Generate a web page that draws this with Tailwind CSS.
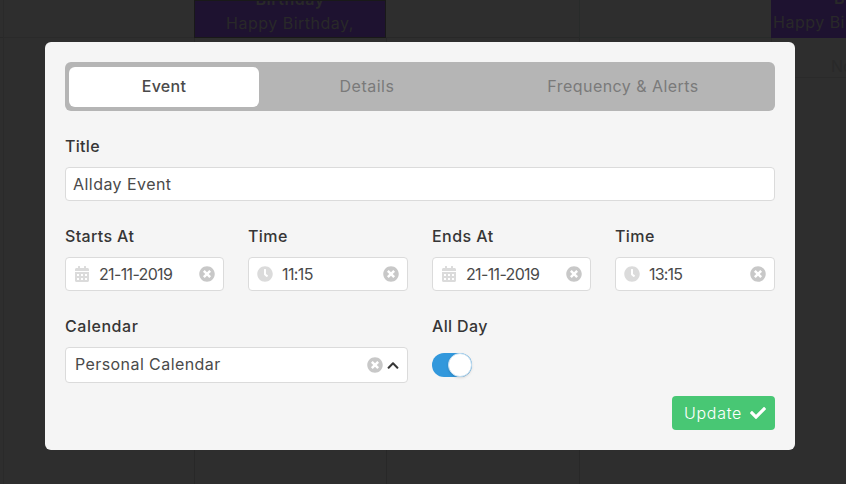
<!DOCTYPE html>
<html lang="en">
<head>
    <meta charset="UTF-8">
    <title>Edit Event</title>
    <script src="https://cdn.jsdelivr.net/npm/@tailwindcss/browser@4"></script>
</head>
<body class="relative w-[846px] h-[484px] overflow-hidden bg-[#2e2e2e] font-['Inter','Open_Sans',sans-serif] text-base text-[#4a4a4a]">
    <!-- Calendar behind the overlay -->
    <div class="grid grid-cols-[3px_191px_192px_193px_192px_75px] w-[846px] h-[484px] text-[#292929]">
        <div class="h-[38px] border-b border-[#282828]"></div>
        <div class="h-[38px] border-l border-b border-[#2a2a2a]"></div>
        <div class="h-[38px] border border-[#191919] bg-[#1e1230] text-center leading-[24px] tracking-[0.5px] overflow-hidden">
            <div class="font-semibold mt-[-14px]">Birthday</div>
            <div>Happy Birthday,</div>
        </div>
        <div class="h-[38px] border-b border-[#282828]"></div>
        <div class="h-[38px] border-l border-b border-[#282b2a]"></div>
        <div class="h-[38px] pl-[2px] bg-[#1e1230] whitespace-nowrap overflow-hidden leading-[24px] tracking-[0.5px]">
            <div class="font-semibold mt-[-14px] pl-[61px]">B</div>
            <div>Happy Birthday,</div>
        </div>
        <div class="h-[446px]"></div>
        <div class="h-[446px] border-l border-[#2a2a2a]"></div>
        <div class="h-[446px] border-l border-[#282828]"></div>
        <div class="h-[446px] border-l border-[#282828]"></div>
        <div class="h-[446px] border-l border-[#282828]"></div>
        <div class="h-[40px] border-l border-b border-[#2a2a2a] pl-[59px] pt-[18px] leading-[20px] whitespace-nowrap">No</div>
    </div>

    <!-- Modal -->
    <div class="absolute left-[45px] top-[42px] w-[750px] h-[408px] rounded-md bg-[#f5f5f5] p-5">
        <div class="flex h-[49px] rounded-md bg-[#b5b5b5] p-1 pt-[5px] text-center">
            <div class="w-[190px] h-[40px] rounded-md bg-white text-[#4a4a4a] leading-[38px] font-medium tracking-[0.3px]">Event</div>
            <div class="w-[216px] h-[40px] text-[#7a7a7a] leading-[38px] tracking-[0.5px]">Details</div>
            <div class="flex-1 h-[40px] text-[#7a7a7a] leading-[38px] tracking-[0.45px]">Frequency &amp; Alerts</div>
        </div>

        <label class="block mt-6 h-[22px] leading-[22px] font-medium text-[#363636] tracking-[0.3px]">Title</label>
        <div class="mt-[10px] h-[34px] pl-[7px] rounded border border-[#dbdbdb] bg-white leading-[32px] tracking-[0.45px]">Allday Event</div>

        <div class="grid grid-cols-[159px_160px_159px_160px] gap-x-6 mt-6">
            <div>
                <label class="block h-[22px] leading-[22px] font-medium text-[#363636] tracking-[0.35px]">Starts At</label>
                <div class="mt-[10px] flex items-center h-[34px] pl-[9px] pr-2 rounded border border-[#dbdbdb] bg-white">
                    <svg class="w-[14px] h-4 fill-[#dbdbdb]" viewBox="0 0 448 512"><path d="M0 464c0 26.5 21.5 48 48 48h352c26.5 0 48-21.5 48-48V192H0v272zm320-196c0-6.6 5.4-12 12-12h40c6.6 0 12 5.4 12 12v40c0 6.6-5.4 12-12 12h-40c-6.6 0-12-5.4-12-12v-40zm0 128c0-6.6 5.4-12 12-12h40c6.6 0 12 5.4 12 12v40c0 6.6-5.4 12-12 12h-40c-6.6 0-12-5.4-12-12v-40zM192 268c0-6.6 5.4-12 12-12h40c6.6 0 12 5.4 12 12v40c0 6.6-5.4 12-12 12h-40c-6.6 0-12-5.4-12-12v-40zm0 128c0-6.6 5.4-12 12-12h40c6.6 0 12 5.4 12 12v40c0 6.6-5.4 12-12 12h-40c-6.6 0-12-5.4-12-12v-40zM64 268c0-6.6 5.4-12 12-12h40c6.6 0 12 5.4 12 12v40c0 6.6-5.4 12-12 12H76c-6.6 0-12-5.4-12-12v-40zm0 128c0-6.6 5.4-12 12-12h40c6.6 0 12 5.4 12 12v40c0 6.6-5.4 12-12 12H76c-6.6 0-12-5.4-12-12v-40zM400 64h-48V16c0-8.8-7.2-16-16-16h-32c-8.8 0-16 7.2-16 16v48H160V16c0-8.8-7.2-16-16-16h-32c-8.8 0-16 7.2-16 16v48H48C21.5 64 0 85.5 0 112v48h448v-48c0-26.5-21.5-48-48-48z"/></svg>
                    <span class="ml-[10px] flex-1 tracking-[-0.65px]">21-11-2019</span>
                    <svg class="w-4 h-4 fill-[#c8c8c8]" viewBox="0 0 512 512"><path d="M256 8C119 8 8 119 8 256s111 248 248 248 248-111 248-248S393 8 256 8zm121.6 313.1c4.7 4.7 4.7 12.3 0 17L338 377.6c-4.7 4.7-12.3 4.7-17 0L256 312l-65.1 65.6c-4.7 4.7-12.3 4.7-17 0L134.4 338c-4.7-4.7-4.7-12.3 0-17l65.6-65-65.6-65.1c-4.7-4.7-4.7-12.3 0-17l39.6-39.6c4.7-4.7 12.3-4.7 17 0l65 65.7 65.1-65.6c4.7-4.7 12.3-4.7 17 0l39.6 39.6c4.7 4.7 4.7 12.3 0 17L312 256l65.6 65.1z"/></svg>
                </div>
            </div>
            <div>
                <label class="block h-[22px] leading-[22px] font-medium text-[#363636] tracking-[0.4px]">Time</label>
                <div class="mt-[10px] flex items-center h-[34px] pl-2 pr-2 rounded border border-[#dbdbdb] bg-white">
                    <svg class="w-4 h-4 fill-[#dbdbdb]" viewBox="0 0 512 512"><path d="M256,8C119,8,8,119,8,256S119,504,256,504,504,393,504,256,393,8,256,8Zm92.49,313h0l-20,25a16,16,0,0,1-22.49,2.5h0l-67-49.72a40,40,0,0,1-15-31.23V112a16,16,0,0,1,16-16h32a16,16,0,0,1,16,16V256l58,42.5A16,16,0,0,1,348.49,321Z"/></svg>
                    <span class="ml-[9px] flex-1 tracking-[-0.6px]">11:15</span>
                    <svg class="w-4 h-4 fill-[#c8c8c8]" viewBox="0 0 512 512"><path d="M256 8C119 8 8 119 8 256s111 248 248 248 248-111 248-248S393 8 256 8zm121.6 313.1c4.7 4.7 4.7 12.3 0 17L338 377.6c-4.7 4.7-12.3 4.7-17 0L256 312l-65.1 65.6c-4.7 4.7-12.3 4.7-17 0L134.4 338c-4.7-4.7-4.7-12.3 0-17l65.6-65-65.6-65.1c-4.7-4.7-4.7-12.3 0-17l39.6-39.6c4.7-4.7 12.3-4.7 17 0l65 65.7 65.1-65.6c4.7-4.7 12.3-4.7 17 0l39.6 39.6c4.7 4.7 4.7 12.3 0 17L312 256l65.6 65.1z"/></svg>
                </div>
            </div>
            <div>
                <label class="block h-[22px] leading-[22px] font-medium text-[#363636] tracking-[0.45px]">Ends At</label>
                <div class="mt-[10px] flex items-center h-[34px] pl-[9px] pr-2 rounded border border-[#dbdbdb] bg-white">
                    <svg class="w-[14px] h-4 fill-[#dbdbdb]" viewBox="0 0 448 512"><path d="M0 464c0 26.5 21.5 48 48 48h352c26.5 0 48-21.5 48-48V192H0v272zm320-196c0-6.6 5.4-12 12-12h40c6.6 0 12 5.4 12 12v40c0 6.6-5.4 12-12 12h-40c-6.6 0-12-5.4-12-12v-40zm0 128c0-6.6 5.4-12 12-12h40c6.6 0 12 5.4 12 12v40c0 6.6-5.4 12-12 12h-40c-6.6 0-12-5.4-12-12v-40zM192 268c0-6.6 5.4-12 12-12h40c6.6 0 12 5.4 12 12v40c0 6.6-5.4 12-12 12h-40c-6.6 0-12-5.4-12-12v-40zm0 128c0-6.6 5.4-12 12-12h40c6.6 0 12 5.4 12 12v40c0 6.6-5.4 12-12 12h-40c-6.6 0-12-5.4-12-12v-40zM64 268c0-6.6 5.4-12 12-12h40c6.6 0 12 5.4 12 12v40c0 6.6-5.4 12-12 12H76c-6.6 0-12-5.4-12-12v-40zm0 128c0-6.6 5.4-12 12-12h40c6.6 0 12 5.4 12 12v40c0 6.6-5.4 12-12 12H76c-6.6 0-12-5.4-12-12v-40zM400 64h-48V16c0-8.8-7.2-16-16-16h-32c-8.8 0-16 7.2-16 16v48H160V16c0-8.8-7.2-16-16-16h-32c-8.8 0-16 7.2-16 16v48H48C21.5 64 0 85.5 0 112v48h448v-48c0-26.5-21.5-48-48-48z"/></svg>
                    <span class="ml-[10px] flex-1 tracking-[-0.65px]">21-11-2019</span>
                    <svg class="w-4 h-4 fill-[#c8c8c8]" viewBox="0 0 512 512"><path d="M256 8C119 8 8 119 8 256s111 248 248 248 248-111 248-248S393 8 256 8zm121.6 313.1c4.7 4.7 4.7 12.3 0 17L338 377.6c-4.7 4.7-12.3 4.7-17 0L256 312l-65.1 65.6c-4.7 4.7-12.3 4.7-17 0L134.4 338c-4.7-4.7-4.7-12.3 0-17l65.6-65-65.6-65.1c-4.7-4.7-4.7-12.3 0-17l39.6-39.6c4.7-4.7 12.3-4.7 17 0l65 65.7 65.1-65.6c4.7-4.7 12.3-4.7 17 0l39.6 39.6c4.7 4.7 4.7 12.3 0 17L312 256l65.6 65.1z"/></svg>
                </div>
            </div>
            <div>
                <label class="block h-[22px] leading-[22px] font-medium text-[#363636] tracking-[0.4px]">Time</label>
                <div class="mt-[10px] flex items-center h-[34px] pl-2 pr-2 rounded border border-[#dbdbdb] bg-white">
                    <svg class="w-4 h-4 fill-[#dbdbdb]" viewBox="0 0 512 512"><path d="M256,8C119,8,8,119,8,256S119,504,256,504,504,393,504,256,393,8,256,8Zm92.49,313h0l-20,25a16,16,0,0,1-22.49,2.5h0l-67-49.72a40,40,0,0,1-15-31.23V112a16,16,0,0,1,16-16h32a16,16,0,0,1,16,16V256l58,42.5A16,16,0,0,1,348.49,321Z"/></svg>
                    <span class="ml-[9px] flex-1 tracking-[-0.8px]">13:15</span>
                    <svg class="w-4 h-4 fill-[#c8c8c8]" viewBox="0 0 512 512"><path d="M256 8C119 8 8 119 8 256s111 248 248 248 248-111 248-248S393 8 256 8zm121.6 313.1c4.7 4.7 4.7 12.3 0 17L338 377.6c-4.7 4.7-12.3 4.7-17 0L256 312l-65.1 65.6c-4.7 4.7-12.3 4.7-17 0L134.4 338c-4.7-4.7-4.7-12.3 0-17l65.6-65-65.6-65.1c-4.7-4.7-4.7-12.3 0-17l39.6-39.6c4.7-4.7 12.3-4.7 17 0l65 65.7 65.1-65.6c4.7-4.7 12.3-4.7 17 0l39.6 39.6c4.7 4.7 4.7 12.3 0 17L312 256l65.6 65.1z"/></svg>
                </div>
            </div>
        </div>

        <div class="grid grid-cols-2 gap-x-6 mt-6">
            <div>
                <label class="block h-[22px] leading-[22px] font-medium text-[#363636] tracking-[0.55px]">Calendar</label>
                <div class="mt-[10px] flex items-center h-[36px] pl-[9px] pr-2 rounded border border-[#dbdbdb] bg-white">
                    <span class="flex-1 tracking-[0.42px] mt-[-2px]">Personal Calendar</span>
                    <svg class="w-4 h-4 fill-[#c8c8c8]" viewBox="0 0 512 512"><path d="M256 8C119 8 8 119 8 256s111 248 248 248 248-111 248-248S393 8 256 8zm121.6 313.1c4.7 4.7 4.7 12.3 0 17L338 377.6c-4.7 4.7-12.3 4.7-17 0L256 312l-65.1 65.6c-4.7 4.7-12.3 4.7-17 0L134.4 338c-4.7-4.7-4.7-12.3 0-17l65.6-65-65.6-65.1c-4.7-4.7-4.7-12.3 0-17l39.6-39.6c4.7-4.7 12.3-4.7 17 0l65 65.7 65.1-65.6c4.7-4.7 12.3-4.7 17 0l39.6 39.6c4.7 4.7 4.7 12.3 0 17L312 256l65.6 65.1z"/></svg>
                    <svg class="ml-1 w-3 h-[13px] fill-[#363636]" viewBox="0 0 448 512"><path d="M240.971 130.524l194.343 194.343c9.373 9.373 9.373 24.569 0 33.941l-22.667 22.667c-9.357 9.357-24.522 9.375-33.901.04L224 227.495 69.255 381.516c-9.379 9.335-24.544 9.317-33.901-.04l-22.667-22.667c-9.373-9.373-9.373-24.569 0-33.941L207.03 130.525c9.372-9.373 24.568-9.373 33.941-.001z"/></svg>
                </div>
            </div>
            <div>
                <label class="block h-[22px] leading-[22px] font-medium text-[#363636] tracking-[0.35px]">All Day</label>
                <div class="mt-4 flex w-10 h-6 justify-end rounded-full bg-[#3298dc]">
                    <span class="w-6 h-6 rounded-full bg-white border border-[#c5dff2] shadow-sm"></span>
                </div>
            </div>
        </div>

        <div class="flex justify-end mt-[13px]">
            <div class="flex items-center justify-between w-[103px] h-[34px] pl-3 pr-[9px] rounded bg-[#48c774] text-white font-light tracking-[0.7px]">
                Update
                <svg class="w-4 h-4 fill-white" viewBox="0 0 512 512"><path d="M173.898 439.404l-166.4-166.4c-9.997-9.997-9.997-26.206 0-36.204l36.203-36.204c9.997-9.998 26.207-9.998 36.204 0L192 312.69 432.095 72.596c9.997-9.997 26.207-9.997 36.204 0l36.203 36.204c9.997 9.997 9.997 26.206 0 36.204l-294.4 294.401c-9.998 9.997-26.207 9.997-36.204-.001z"/></svg>
            </div>
        </div>
    </div>
</body>
</html>
